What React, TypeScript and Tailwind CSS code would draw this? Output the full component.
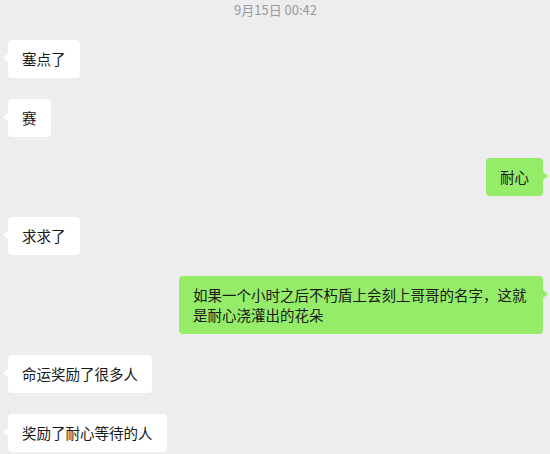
type Msg = { text: string; mine?: boolean }

const MESSAGES: Msg[] = [
  { text: '塞点了' },
  { text: '赛' },
  { text: '耐心', mine: true },
  { text: '求求了' },
  { text: '如果一个小时之后不朽盾上会刻上哥哥的名字，这就是耐心浇灌出的花朵', mine: true },
  { text: '命运奖励了很多人' },
  { text: '奖励了耐心等待的人' },
]

function Bubble({ text, mine }: Msg) {
  return (
    <div className={`flex ${mine ? 'justify-end' : 'justify-start'}`}>
      <div
        className={`relative max-w-[364px] rounded-[4px] px-[14px] py-[9px] text-[14.5px] leading-[20px] text-[#191919] ${
          mine ? 'bg-[#95ec69]' : 'bg-white'
        }`}
      >
        {text}
        {mine ? (
          <span className="absolute right-[-5px] top-[13px] h-0 w-0 border-y-[5px] border-l-[6px] border-y-transparent border-l-[#95ec69]" />
        ) : (
          <span className="absolute left-[-5px] top-[13px] h-0 w-0 border-y-[5px] border-r-[6px] border-y-transparent border-r-white" />
        )}
      </div>
    </div>
  )
}

export default function App() {
  return (
    <div
      className="h-[454px] w-[550px] overflow-hidden bg-[#ededef] pl-2 pr-[7px]"
      style={{ fontFamily: '"Noto Sans CJK SC", "Noto Sans", sans-serif' }}
    >
      <div className="pt-[1px] text-center text-[13px] leading-[18px] text-[#9a9a9a]">9月15日 00:42</div>
      <div className="mt-[21px] flex flex-col gap-[21px]">
        {MESSAGES.map((m, i) => (
          <Bubble key={i} {...m} />
        ))}
      </div>
    </div>
  )
}
